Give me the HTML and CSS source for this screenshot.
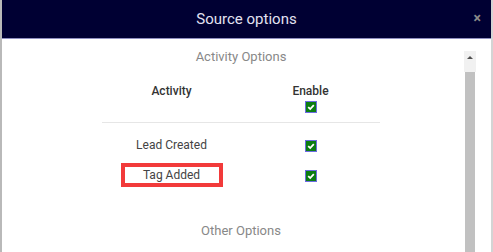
FILE: index.html
```html
<!DOCTYPE html>
<html lang="en">
<head>
    <title>Source options</title>
    <link rel="stylesheet" href="styles.css">
</head>
<body>
    <div class="modal">
        <div class="modal-header">
            <h1>Source options</h1>
            <span class="close">&times;</span>
        </div>
        <div class="modal-body">
            <div class="content">
                <div class="section-title">Activity Options</div>
                <div class="options">
                    <div class="row head">
                        <div class="cell">Activity</div>
                        <div class="cell">
                            <div>Enable</div>
                            <span class="check"><svg viewBox="0 0 10 10"><path d="M2.2 5.2 L4.2 7 L7.8 3.2" fill="none" stroke="#fff" stroke-width="1.8"/></svg></span>
                        </div>
                    </div>
                    <div class="row first">
                        <div class="cell">Lead Created</div>
                        <div class="cell"><span class="check"><svg viewBox="0 0 10 10"><path d="M2.2 5.2 L4.2 7 L7.8 3.2" fill="none" stroke="#fff" stroke-width="1.8"/></svg></span></div>
                    </div>
                    <div class="row">
                        <div class="cell"><span class="marked">Tag Added</span></div>
                        <div class="cell"><span class="check"><svg viewBox="0 0 10 10"><path d="M2.2 5.2 L4.2 7 L7.8 3.2" fill="none" stroke="#fff" stroke-width="1.8"/></svg></span></div>
                    </div>
                </div>
                <div class="section-title other">Other Options</div>
            </div>
            <div class="scrollbar">
                <div class="scroll-up"></div>
                <div class="scroll-thumb"></div>
            </div>
        </div>
    </div>
</body>
</html>
```
FILE: styles.css
```css
body {
    margin: 0;
    padding: 0;
    background-color: #fff;
    font-family: Roboto, "Liberation Sans", Arial, sans-serif;
    overflow: hidden;
    height: 252px;
}

.modal {
    height: 252px;
    border-left: 2px solid #b9b9b9;
    border-right: 2px solid #d4d4d4;
    box-sizing: border-box;
}

.modal-header {
    height: 38px;
    background-color: #000033;
    border-bottom: 1px solid #8f8fc0;
    display: flex;
    align-items: center;
    justify-content: center;
    position: relative;
}

.modal-header h1 {
    margin: 0;
    font-size: 15px;
    font-weight: 400;
    color: #e2e2f2;
}

.close {
    position: absolute;
    right: 10px;
    top: 10px;
    color: #8a8a8a;
    font-size: 14px;
    font-weight: bold;
}

.modal-body {
    display: flex;
    height: 213px;
}

.content {
    flex: 1;
    padding-left: 16px;
    padding-top: 10px;
}

.section-title {
    text-align: center;
    font-size: 13px;
    line-height: 16px;
    color: #888;
}

.options {
    width: 278px;
    margin: 19px auto 0;
}

.row {
    display: grid;
    grid-template-columns: 1fr 1fr;
    height: 30px;
    align-items: center;
    font-size: 12px;
    color: #444;
}

.row .cell {
    text-align: center;
}

.row.head {
    height: auto;
    align-items: start;
    padding-bottom: 9px;
    border-bottom: 1px solid #e6e6e6;
    font-weight: 500;
    color: #333;
    line-height: 14px;
}

.row.head .check {
    margin-top: 2px;
}

.row.first {
    margin-top: 7px;
}

.check {
    display: inline-block;
    width: 10px;
    height: 10px;
    background-color: #0b7d12;
    border: 1px solid #6c6ce0;
    vertical-align: middle;
}

.check svg {
    display: block;
    width: 10px;
    height: 10px;
}

.marked {
    display: inline-block;
    width: 94px;
    height: 16px;
    line-height: 16px;
    border: 4px solid #f23a3a;
}

.other {
    margin-top: 33px;
}

.scrollbar {
    width: 12px;
    margin-top: 12px;
    margin-right: 15px;
    display: flex;
    flex-direction: column;
    align-items: center;
}

.scroll-up {
    width: 12px;
    height: 21px;
    background-color: #f1f1f1;
    position: relative;
}

.scroll-up::after {
    content: "";
    position: absolute;
    left: 3px;
    top: 5px;
    border-left: 3px solid transparent;
    border-right: 3px solid transparent;
    border-bottom: 3px solid #505050;
}

.scroll-thumb {
    width: 10px;
    flex: 1;
    background-color: #c1c1c1;
}
```
